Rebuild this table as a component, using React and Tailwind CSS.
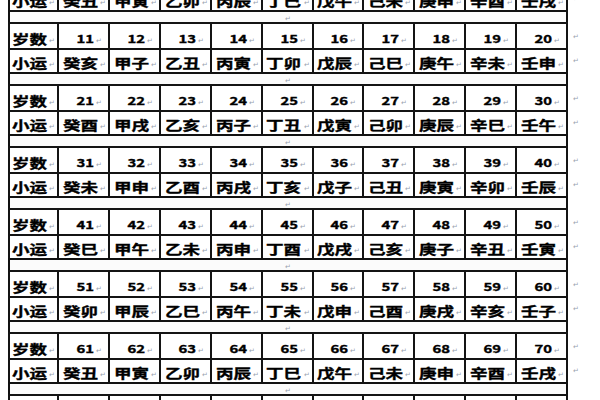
const STEMS = '甲乙丙丁戊己庚辛壬癸';
const BRANCHES = '子丑寅卯辰巳午未申酉戌亥';

// age n -> ganzhi, age 11 is 癸亥
const ganzhi = (n) => {
  const idx = (48 + n) % 60;
  return STEMS[idx % 10] + BRANCHES[idx % 12];
};

const BLOCKS = Array.from({ length: 6 }, (_, b) =>
  Array.from({ length: 10 }, (_, i) => (b + 1) * 10 + i + 1)
);
const FIRST = Array.from({ length: 10 }, (_, i) => ganzhi(i + 1));

const FONT = { fontFamily: '"Noto Sans CJK SC", "Noto Sans", sans-serif' };

function Mark({ className = '' }) {
  return <span className={`text-[7px] leading-none text-gray-400 ${className}`}>↵</span>;
}

function Cell({ children, pad = 'pr-[3px]', small = false }) {
  return (
    <div className={`bg-white flex items-end justify-end pb-[3px] ${pad}`}>
      {children != null && (
        <>
          <span
            className={`inline-block origin-right scale-x-135 leading-none font-bold text-black whitespace-nowrap [-webkit-text-stroke:0.35px_black] ${
              small ? 'text-[11px] mb-[1px]' : 'text-[13px]'
            }`}
          >
            {children}
          </span>
          <Mark className="ml-[2px] mb-[1px]" />
        </>
      )}
    </div>
  );
}

function SeparatorRow() {
  return (
    <div className="flex">
      <div className="w-[560px] bg-[#111] px-[2px] pt-[2px]">
        <div className="h-[10px] bg-[#fbfbfb] flex items-end justify-center">
          <Mark />
        </div>
      </div>
    </div>
  );
}

function DataRow({ label, items, height, numeric, mark = true }) {
  return (
    <div className="flex items-end">
      <div className="w-[560px] bg-[#141414] px-[2px] pt-[2px]">
        <div className={`grid grid-cols-[47px_repeat(10,minmax(0,1fr))] gap-x-[2px] ${height}`}>
          <Cell pad="pr-[2px]">{label}</Cell>
          {items.map((it, i) => (
            <Cell key={i} pad={numeric ? 'pr-[6px]' : 'pr-[2px]'} small={numeric}>{it}</Cell>
          ))}
        </div>
      </div>
      {mark && <Mark className="ml-[5px] mb-[8px]" />}
    </div>
  );
}

export default function App() {
  return (
    <div className="w-[600px] h-[400px] overflow-hidden bg-white" style={FONT}>
      <div className="ml-[8px] mt-[-14px] flex flex-col">
        <DataRow label="小运" items={FIRST} height="h-[22px]" />
        {BLOCKS.map((ages, b) => (
          <div key={b} className="flex flex-col">
            <SeparatorRow />
            <DataRow label="岁数" items={ages} height="h-[24px]" numeric />
            <DataRow label="小运" items={ages.map(ganzhi)} height="h-[22px]" />
          </div>
        ))}
        <SeparatorRow />
        <DataRow label={null} items={Array(10).fill(null)} height="h-[8px]" mark={false} />
      </div>
    </div>
  );
}
